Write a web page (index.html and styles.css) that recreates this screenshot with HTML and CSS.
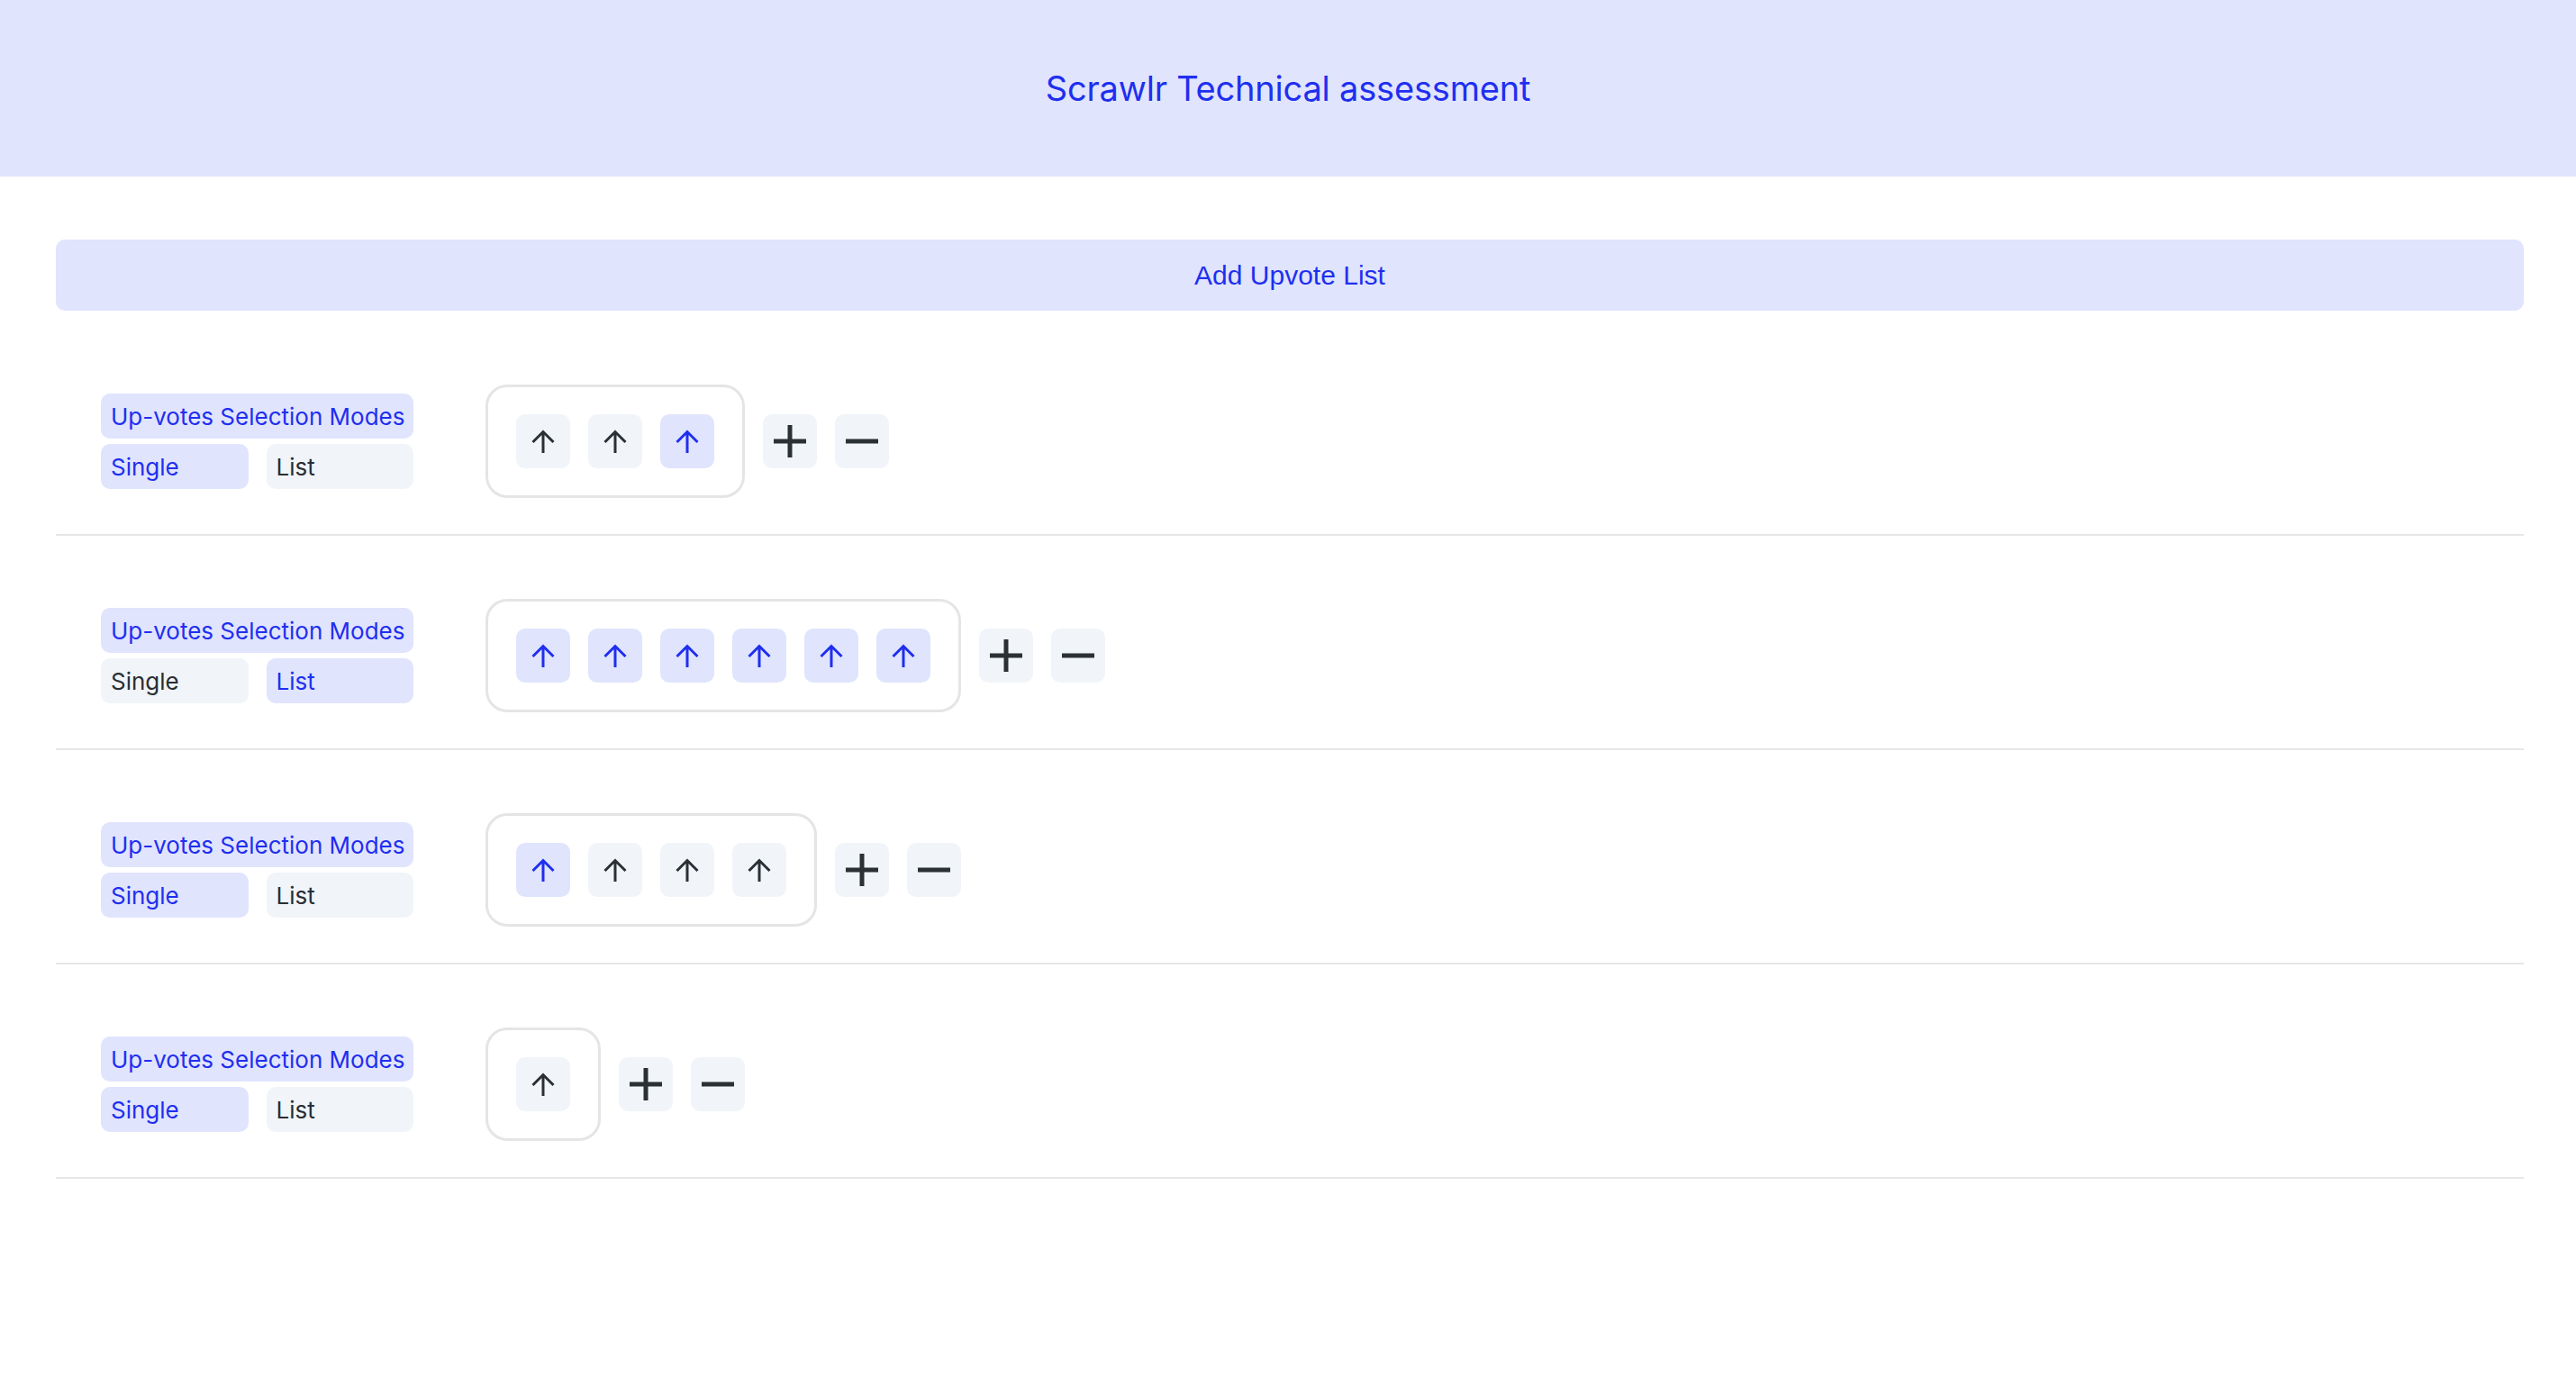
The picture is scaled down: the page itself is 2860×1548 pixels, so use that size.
FILE: index.html
```html
<!DOCTYPE html>
<html lang="en">
<head>
<meta charset="utf-8">
<title>Scrawlr Technical assessment</title>
<link rel="stylesheet" href="styles.css">
</head>
<body>
<header class="top">
  <h1 class="title">Scrawlr Technical assessment</h1>
</header>
<main class="page">
  <button class="add-btn">Add Upvote List</button>
  <div class="lists">

    <section class="row">
      <div class="modes">
        <div class="mode-title">Up-votes Selection Modes</div>
        <div class="mode active">Single</div>
        <div class="mode">List</div>
      </div>
      <div class="votes-area">
        <div class="votes">
          <span class="vote"><svg viewBox="0 0 26 26"><path d="M13 26V3M1.5 14L13 2.5 24.5 14"/></svg></span>
          <span class="vote"><svg viewBox="0 0 26 26"><path d="M13 26V3M1.5 14L13 2.5 24.5 14"/></svg></span>
          <span class="vote on"><svg viewBox="0 0 26 26"><path d="M13 26V3M1.5 14L13 2.5 24.5 14"/></svg></span>
        </div>
        <span class="ctrl"><svg viewBox="0 0 36 36"><path d="M18 0V36M0 18H36"/></svg></span>
        <span class="ctrl"><svg viewBox="0 0 36 36"><path d="M0 18H36"/></svg></span>
      </div>
    </section>

    <section class="row">
      <div class="modes">
        <div class="mode-title">Up-votes Selection Modes</div>
        <div class="mode">Single</div>
        <div class="mode active">List</div>
      </div>
      <div class="votes-area">
        <div class="votes">
          <span class="vote on"><svg viewBox="0 0 26 26"><path d="M13 26V3M1.5 14L13 2.5 24.5 14"/></svg></span>
          <span class="vote on"><svg viewBox="0 0 26 26"><path d="M13 26V3M1.5 14L13 2.5 24.5 14"/></svg></span>
          <span class="vote on"><svg viewBox="0 0 26 26"><path d="M13 26V3M1.5 14L13 2.5 24.5 14"/></svg></span>
          <span class="vote on"><svg viewBox="0 0 26 26"><path d="M13 26V3M1.5 14L13 2.5 24.5 14"/></svg></span>
          <span class="vote on"><svg viewBox="0 0 26 26"><path d="M13 26V3M1.5 14L13 2.5 24.5 14"/></svg></span>
          <span class="vote on"><svg viewBox="0 0 26 26"><path d="M13 26V3M1.5 14L13 2.5 24.5 14"/></svg></span>
        </div>
        <span class="ctrl"><svg viewBox="0 0 36 36"><path d="M18 0V36M0 18H36"/></svg></span>
        <span class="ctrl"><svg viewBox="0 0 36 36"><path d="M0 18H36"/></svg></span>
      </div>
    </section>

    <section class="row">
      <div class="modes">
        <div class="mode-title">Up-votes Selection Modes</div>
        <div class="mode active">Single</div>
        <div class="mode">List</div>
      </div>
      <div class="votes-area">
        <div class="votes">
          <span class="vote on"><svg viewBox="0 0 26 26"><path d="M13 26V3M1.5 14L13 2.5 24.5 14"/></svg></span>
          <span class="vote"><svg viewBox="0 0 26 26"><path d="M13 26V3M1.5 14L13 2.5 24.5 14"/></svg></span>
          <span class="vote"><svg viewBox="0 0 26 26"><path d="M13 26V3M1.5 14L13 2.5 24.5 14"/></svg></span>
          <span class="vote"><svg viewBox="0 0 26 26"><path d="M13 26V3M1.5 14L13 2.5 24.5 14"/></svg></span>
        </div>
        <span class="ctrl"><svg viewBox="0 0 36 36"><path d="M18 0V36M0 18H36"/></svg></span>
        <span class="ctrl"><svg viewBox="0 0 36 36"><path d="M0 18H36"/></svg></span>
      </div>
    </section>

    <section class="row">
      <div class="modes">
        <div class="mode-title">Up-votes Selection Modes</div>
        <div class="mode active">Single</div>
        <div class="mode">List</div>
      </div>
      <div class="votes-area">
        <div class="votes">
          <span class="vote"><svg viewBox="0 0 26 26"><path d="M13 26V3M1.5 14L13 2.5 24.5 14"/></svg></span>
        </div>
        <span class="ctrl"><svg viewBox="0 0 36 36"><path d="M18 0V36M0 18H36"/></svg></span>
        <span class="ctrl"><svg viewBox="0 0 36 36"><path d="M0 18H36"/></svg></span>
      </div>
    </section>

  </div>
</main>
</body>
</html>
```

FILE: styles.css
```css
html, body {
  margin: 0;
  padding: 0;
  background: #ffffff;
}

body {
  font-family: Inter, "Noto Sans", "Liberation Sans", sans-serif;
  color: #2a2e33;
}

.top {
  height: 196px;
  background: #e0e4fd;
  display: flex;
  align-items: center;
  justify-content: center;
}

.title {
  margin: 0;
  font-size: 38px;
  font-weight: 400;
  color: #1f2ff0;
  letter-spacing: -0.2px;
}

.page {
  padding: 0 58px 0 62px;
}

.add-btn {
  display: block;
  width: 100%;
  height: 79px;
  margin-top: 70px;
  border: none;
  border-radius: 10px;
  background: #e0e4fd;
  color: #1f2ff0;
  font-family: "Liberation Sans", Arial, sans-serif;
  font-size: 30px;
  padding: 0;
}

.lists {
  margin-top: 12px;
}

.row {
  display: flex;
  align-items: center;
  gap: 80px;
  padding: 70px 0 40px 50px;
  border-bottom: 2px solid #e6e6e6;
}

.modes {
  width: 347px;
  display: grid;
  grid-template-columns: 1fr 1fr;
  column-gap: 20px;
  row-gap: 6px;
}

.mode-title,
.mode {
  height: 50px;
  display: flex;
  align-items: center;
  padding-left: 11px;
  border-radius: 10px;
  font-size: 26px;
  background: #f1f4f8;
  color: #2a2e33;
  box-sizing: border-box;
}

.mode-title {
  grid-column: 1 / 3;
  background: #e0e4fd;
  color: #1f2ff0;
}

.mode.active {
  background: #e0e4fd;
  color: #1f2ff0;
}

.votes-area {
  display: flex;
  align-items: center;
  gap: 20px;
}

.votes {
  display: flex;
  gap: 20px;
  padding: 30px 31px;
  border: 3px solid #e5e5e5;
  border-radius: 24px;
}

.vote,
.ctrl {
  width: 60px;
  height: 60px;
  border-radius: 10px;
  background: #f1f4f8;
  display: flex;
  align-items: center;
  justify-content: center;
}

.vote svg {
  width: 26px;
  height: 26px;
  fill: none;
  stroke: #2b3035;
  stroke-width: 3;
}

.vote.on {
  background: #e0e4fd;
}

.vote.on svg {
  stroke: #1f2ff0;
}

.ctrl svg {
  width: 36px;
  height: 36px;
  fill: none;
  stroke: #2b3035;
  stroke-width: 5;
}
```
